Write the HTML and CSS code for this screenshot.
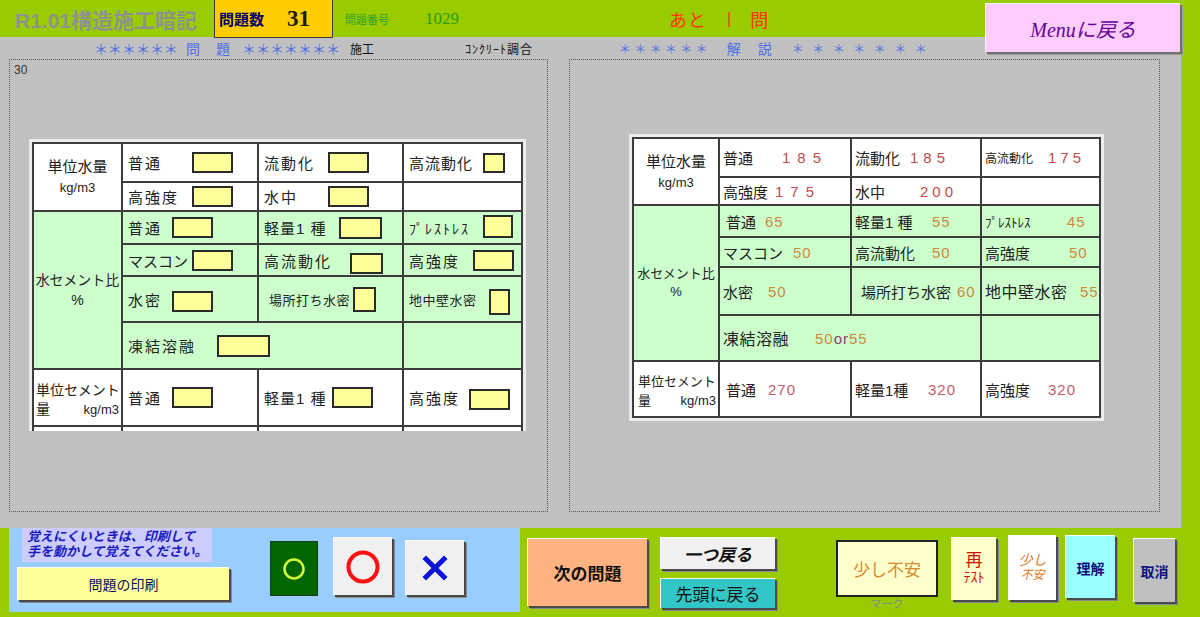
FILE: index.html
```html
<!DOCTYPE html>
<html lang="ja">
<head>
<meta charset="utf-8">
<title>R1.01構造施工暗記</title>
<link rel="stylesheet" href="styles.css">
</head>
<body>
<header class="topbar">
  <div class="title">R1.01構造施工暗記</div>
  <div class="count"><span class="count-label">問題数</span><span class="count-num">31</span></div>
  <span class="qno-label">問題番号</span>
  <span class="qno">1029</span>
  <div class="remain"><span class="ato">あと</span><span class="bar">|</span><span class="mon">問</span></div>
</header>
<div class="menu-btn">Menuに戻る</div>

<main class="work">
  <div class="heads">
    <span class="stars-l">＊＊＊＊＊＊</span><span class="hq1">問</span><span class="hq2">題</span><span class="stars-l2">＊＊＊＊＊＊＊</span>
    <span class="sub1">施工</span>
    <span class="sub2">ｺﾝｸﾘｰﾄ調合</span>
    <span class="stars-r">＊＊＊＊＊＊</span><span class="ha1">解</span><span class="ha2">説</span><span class="stars-r2">＊＊＊＊＊＊＊</span>
  </div>
  <div class="panels">
    <section class="panel panel-l">
      <div class="pageno">30</div>
      <div class="frame frame-l">
        <div class="tbl tbl-l">
          <div class="c w hd rs2"><span>単位水量</span><span class="unit">kg/m3</span></div>
          <div class="c w"><span class="lb l64">普通</span><span class="bx"></span></div>
          <div class="c w"><span class="lb l64">流動化</span><span class="bx"></span></div>
          <div class="c w"><span class="lb l74 tight">高流動化</span><span class="bx bx-n"></span></div>
          <div class="c w"><span class="lb l64">高強度</span><span class="bx"></span></div>
          <div class="c w"><span class="lb l64">水中</span><span class="bx"></span></div>
          <div class="c w"></div>

          <div class="c g hd hd-wc rs4"><span>水セメント比</span><span>%</span></div>
          <div class="c g"><span class="lb l44">普通</span><span class="bx"></span></div>
          <div class="c g"><span class="lb l75 tight">軽量1 種</span><span class="bx bx-43"></span></div>
          <div class="c g"><span class="lb l74 hw">ﾌﾟﾚｽﾄﾚｽ</span><span class="bx bx-30"></span></div>
          <div class="c g"><span class="lb l64 kata">マスコン</span><span class="bx"></span></div>
          <div class="c g"><span class="lb l86">高流動化</span><span class="bx bx-33"></span></div>
          <div class="c g"><span class="lb l64">高強度</span><span class="bx"></span></div>
          <div class="c g"><span class="lb l44">水密</span><span class="bx bx-lo"></span></div>
          <div class="c g"><span class="lb l89 s13 ind5">場所打ち水密</span><span class="bx bx-23"></span></div>
          <div class="c g"><span class="lb l80 s13">地中壁水密</span><span class="bx bx-21"></span></div>
          <div class="c g cs2"><span class="lb l89">凍結溶融</span><span class="bx bx-53"></span></div>
          <div class="c g"></div>

          <div class="c w hd2"><span>単位セメント</span><span class="hd2-row"><span>量</span><span class="unit">kg/m3</span></span></div>
          <div class="c w"><span class="lb l44">普通</span><span class="bx"></span></div>
          <div class="c w"><span class="lb l68 tight">軽量1 種</span><span class="bx"></span></div>
          <div class="c w"><span class="lb l60">高強度</span><span class="bx bx-lo"></span></div>

          <div class="c w"></div>
          <div class="c w"></div>
          <div class="c w"></div>
          <div class="c w"></div>
        </div>
      </div>
    </section>

    <section class="panel panel-r">
      <div class="frame frame-r">
        <div class="tbl tbl-r">
          <div class="c w hd rs2"><span>単位水量</span><span class="unit">kg/m3</span></div>
          <div class="c w"><span class="lb r59">普通</span><span class="num n-red sp8">185</span></div>
          <div class="c w"><span class="lb r55">流動化</span><span class="num n-red sp6">185</span></div>
          <div class="c w"><span class="lb r63 s12">高流動化</span><span class="num n-red sp5">175</span></div>
          <div class="c w"><span class="lb r52">高強度</span><span class="num n-red sp8">175</span></div>
          <div class="c w"><span class="lb r65">水中</span><span class="num n-red sp5">200</span></div>
          <div class="c w"></div>

          <div class="c g hd hd-wc-r rs4"><span>水セメント比</span><span>%</span></div>
          <div class="c g"><span class="lb r42 ind3">普通</span><span class="num n-or">65</span></div>
          <div class="c g"><span class="lb r77">軽量1 種</span><span class="num n-or">55</span></div>
          <div class="c g"><span class="lb r82 hw13">ﾌﾟﾚｽﾄﾚｽ</span><span class="num n-or">45</span></div>
          <div class="c g"><span class="lb r70">マスコン</span><span class="num n-or">50</span></div>
          <div class="c g"><span class="lb r77">高流動化</span><span class="num n-or">50</span></div>
          <div class="c g"><span class="lb r84">高強度</span><span class="num n-or">50</span></div>
          <div class="c g"><span class="lb r45">水密</span><span class="num n-or">50</span></div>
          <div class="c g"><span class="lb r102 ind6">場所打ち水密</span><span class="num n-or">60</span></div>
          <div class="c g"><span class="lb r95 s16">地中壁水密</span><span class="num n-or">55</span></div>
          <div class="c g cs2"><span class="lb r92 s16">凍結溶融</span><span class="num n-or">50<span class="n-or2">or</span>55</span></div>
          <div class="c g"></div>

          <div class="c w hd2 hd2-r"><span>単位セメント</span><span class="hd2-row"><span>量</span><span class="unit">kg/m3</span></span></div>
          <div class="c w"><span class="lb r45 ind3">普通</span><span class="num n-pk">270</span></div>
          <div class="c w"><span class="lb r73">軽量1種</span><span class="num n-pk">320</span></div>
          <div class="c w"><span class="lb r63">高強度</span><span class="num n-pk">320</span></div>
        </div>
      </div>
    </section>
  </div>
</main>

<footer class="footer">
  <div class="memo">
    <div class="memo-left">
      <p class="note">覚えにくいときは、印刷して<br>手を動かして覚えてください。</p>
      <div class="btn print">問題の印刷</div>
    </div>
    <div class="mk mk-green">
      <svg width="24" height="24" viewBox="0 0 24 24"><circle cx="12" cy="12" r="9.5" fill="none" stroke="#d8ff33" stroke-width="2.5"/></svg>
    </div>
    <div class="btn mk mk-o">
      <svg width="36" height="36" viewBox="0 0 36 36"><circle cx="18" cy="18" r="14.5" fill="none" stroke="#ff1010" stroke-width="4"/></svg>
    </div>
    <div class="btn mk mk-x">
      <svg width="28" height="28" viewBox="0 0 28 28"><path d="M5 5 L23 23 M23 5 L5 23" stroke="#0a14d8" stroke-width="5" stroke-linecap="square"/></svg>
    </div>
  </div>
  <div class="btn next">次の問題</div>
  <div class="navcol">
    <div class="btn back">一つ戻る</div>
    <div class="btn first">先頭に戻る</div>
  </div>
  <div class="markbox">
    <div class="mark-face">少し不安</div>
    <span class="mark-cap">マーク</span>
  </div>
  <div class="btn retest"><span class="re">再</span><span class="test">ﾃｽﾄ</span></div>
  <div class="btn unsure"><span>少し</span><span class="u2">不安</span></div>
  <div class="btn ok">理解</div>
  <div class="btn cancel">取消</div>
</footer>
</body>
</html>
```

FILE: styles.css
```css
* { box-sizing: border-box; margin: 0; padding: 0; }
html, body { width: 1200px; height: 617px; overflow: hidden; }
body {
  background: #99cc00;
  font-family: "Liberation Sans", "Noto Sans CJK JP", sans-serif;
  color: #222;
  position: relative;
}

/* ---------- top bar ---------- */
.topbar { height: 37px; display: flex; align-items: center; }
.title {
  margin-left: 15px; width: 199px;
  font-size: 21px; font-weight: bold; color: #8e948c;
  white-space: nowrap;
}
.count {
  align-self: flex-start;
  width: 119px; height: 38px;
  background: #ffcc00;
  border: 1px solid #3a3a3a; border-top: none;
  display: flex; align-items: center; padding-left: 4px;
}
.count-label { width: 68px; font-size: 15px; font-weight: bold; color: #000066; }
.count-num { font-family: "Liberation Serif", serif; font-size: 23px; font-weight: bold; color: #1a1a1a; }
.qno-label { margin-left: 12px; width: 80px; font-size: 11px; color: #2fa02f; }
.qno { font-family: "Liberation Serif", serif; font-size: 17px; color: #2f9a00; }
.remain { margin-left: 210px; display: flex; align-items: center; color: #ff3300; font-size: 18px; }
.ato { letter-spacing: 1px; }
.bar { margin-left: 20px; font-size: 16px; }
.mon { margin-left: 19px; }

.menu-btn {
  position: absolute; left: 985px; top: 3px;
  width: 195px; height: 49px;
  background: #ffccff;
  border-top: 1px solid #f4f4f4; border-left: 1px solid #f4f4f4;
  box-shadow: 2px 2px 0 #707070, 3px 3px 0 #9a9a9a;
  display: flex; align-items: center; justify-content: center;
  font-family: "Liberation Serif", "Noto Sans CJK JP", serif;
  font-style: italic; font-size: 20px; color: #660099;
}

/* ---------- work area ---------- */
.work { width: 1181px; height: 491px; background: #c0c0c0; }
.heads {
  height: 22px; display: flex; align-items: center;
  font-size: 14px; color: #4f6fe0; white-space: nowrap;
}
.stars-l { margin-left: 94px; }
.hq1 { margin-left: 8px; }
.hq2 { margin-left: 16px; }
.stars-l2 { margin-left: 12px; }
.sub1 { margin-left: 10px; font-size: 12px; color: #111; }
.sub2 { margin-left: 91px; font-size: 12px; letter-spacing: 1px; color: #111; }
.stars-r { margin-left: 86px; font-size: 12px; letter-spacing: 3.3px; }
.ha1 { margin-left: 16px; }
.ha2 { margin-left: 17px; }
.stars-r2 { margin-left: 20px; font-size: 12px; letter-spacing: 8.5px; }

.panels { display: flex; padding-left: 9px; }
.panel { height: 453px; border: 1px dotted #555; }
.panel-l { width: 539px; padding: 3px 4px; }
.panel-r { width: 591px; margin-left: 21px; }
.pageno { font-size: 12px; line-height: 14px; color: #333; }

.frame { background: #ececec; padding: 3px 3px 0 3px; overflow: hidden; }
.frame-l { width: 497px; height: 292px; margin: 62px 0 0 15px; }
.frame-r { width: 475px; height: 287px; margin: 74px 0 0 59px; }

.tbl { display: grid; border-left: 2px solid #3c3c3c; border-top: 2px solid #3c3c3c; }
.tbl-l {
  grid-template-columns: 89px 136px 145px 119px;
  grid-template-rows: 39px 29px 33px 32px 46px 47px 57px 20px;
}
.tbl-r {
  grid-template-columns: 86px 132px 130px 119px;
  grid-template-rows: 39px 28px 32px 30px 48px 46px 56px;
}
.c {
  border-right: 2px solid #3c3c3c; border-bottom: 2px solid #3c3c3c;
  display: flex; align-items: center;
  padding-left: 5px;
  font-size: 15px; white-space: nowrap; color: #222;
}
.tbl-l .c { letter-spacing: 2px; }
.tbl-r .c { padding-left: 3px; }
.w { background: #ffffff; }
.g { background: #ccffcc; }
.rs2 { grid-row: span 2; }
.rs4 { grid-row: span 4; }
.cs2 { grid-column: span 2; }

.c.hd {
  flex-direction: column; justify-content: center; align-items: center;
  padding: 0; letter-spacing: 0; line-height: 21px; font-size: 15px;
}
.tbl .c.hd, .tbl .c.hd2 { letter-spacing: 0; }
.c.hd-wc { font-size: 14px; line-height: 20px; }
.c.hd-wc-r { font-size: 13px; line-height: 18px; }
.unit { font-size: 13px; }
.c.hd2 {
  flex-direction: column; align-items: stretch; justify-content: center;
  padding: 5px 2px 0 2px; font-size: 14px; line-height: 19px;
}
.c.hd2-r { font-size: 13px; padding: 3px 2px 0 4px; }
.hd2-row { display: flex; justify-content: space-between; }

.lb { flex: none; }
.tight { letter-spacing: 1px; }
.kata { letter-spacing: 0; }
.hw { font-size: 14px; letter-spacing: 2px; }
.hw13 { font-size: 13px; letter-spacing: 0; }
.s12 { font-size: 12px; }
.s13 { font-size: 13px; letter-spacing: 0.5px; }
.s16 { font-size: 16px; letter-spacing: 0.5px; }
.ind3 { padding-left: 3px; }
.ind5 { padding-left: 5px; }
.ind6 { padding-left: 6px; }

.l44 { width: 44px; } .l60 { width: 60px; } .l64 { width: 64px; } .l68 { width: 68px; }
.l74 { width: 74px; } .l75 { width: 75px; } .l80 { width: 80px; } .l86 { width: 86px; } .l89 { width: 89px; }

.r42 { width: 42px; } .r45 { width: 45px; } .r52 { width: 52px; } .r55 { width: 55px; }
.r59 { width: 59px; } .r63 { width: 63px; } .r65 { width: 65px; } .r70 { width: 70px; }
.r73 { width: 73px; } .r77 { width: 77px; } .r82 { width: 82px; } .r84 { width: 84px; }
.r92 { width: 92px; } .r95 { width: 95px; } .r102 { width: 102px; }

.bx {
  flex: none; display: block;
  width: 41px; height: 21px;
  background: #ffff99; border: 2px solid #2a2a2a;
}
.bx-n { width: 22px; height: 20px; }
.bx-43 { width: 43px; height: 22px; }
.bx-30 { width: 30px; height: 23px; margin-top: -3px; }
.bx-33 { width: 33px; height: 21px; margin-top: 7px; }
.bx-23 { width: 23px; height: 25px; }
.bx-21 { width: 21px; height: 26px; margin-top: 6px; }
.bx-53 { width: 53px; height: 22px; }
.bx-lo { margin-top: 4px; }

.num { font-family: "Liberation Sans", sans-serif; font-size: 15px; letter-spacing: 1px; }
.n-red { color: #c24a4a; }
.n-or { color: #cc8a3a; }
.n-or2 { color: #7a4a70; }
.n-pk { color: #c45c6c; }
.sp5 { letter-spacing: 4px; }
.sp6 { letter-spacing: 5px; }
.sp8 { letter-spacing: 7px; }

/* ---------- footer ---------- */
.footer { height: 89px; display: flex; align-items: flex-start; padding-left: 9px; }
.btn {
  display: flex; align-items: center; justify-content: center;
  border-top: 1px solid #fafafa; border-left: 1px solid #fafafa;
  box-shadow: 2px 2px 0 #4a4a4a, 3px 3px 0 #8a8a8a;
  flex: none;
}
.memo {
  width: 511px; height: 84px; background: #99ccff;
  display: flex; align-items: flex-start; flex: none;
}
.memo-left { margin-left: 8px; width: 215px; }
.note {
  margin-left: 5px; width: 190px; height: 34px;
  background: #ccccff;
  padding: 1px 0 0 5px;
  font-size: 13px; line-height: 15px; font-weight: bold; font-style: italic;
  color: #1a1ac0; white-space: nowrap;
}
.print {
  margin-top: 5px; width: 212px; height: 33px;
  background: #ffff99; font-size: 14px; color: #101060;
}
.mk { flex: none; display: flex; align-items: center; justify-content: center; }
.mk-green {
  margin-left: 38px; margin-top: 13px; width: 48px; height: 55px;
  background: #006600; border: 1px solid #1a3a1a;
}
.mk-o { margin-left: 15px; margin-top: 9px; width: 59px; height: 58px; background: #f0f0f0; }
.mk-x { margin-left: 13px; margin-top: 12px; width: 59px; height: 55px; background: #f0f0f0; }

.next {
  margin-left: 7px; margin-top: 10px; width: 120px; height: 68px;
  background: #ffb380; font-size: 17px; font-weight: bold; color: #111;
}
.navcol { margin-left: 13px; margin-top: 9px; width: 115px; flex: none; }
.back {
  height: 32px; background: #f0f0f0;
  font-size: 17px; font-weight: bold; font-style: italic; color: #111;
}
.first {
  margin-top: 9px; height: 30px; background: #33c6c6;
  font-size: 17px; color: #111;
}
.markbox {
  margin-left: 61px; margin-top: 12px; width: 102px; flex: none;
  display: flex; flex-direction: column; align-items: center;
}
.mark-face {
  width: 102px; height: 57px; background: #ffffcc; border: 2px solid #222;
  display: flex; align-items: center; justify-content: center;
  font-size: 17px; color: #d88a2a;
}
.mark-cap { margin-top: 1px; font-size: 11px; line-height: 13px; color: #8a8a8a; }
.retest {
  margin-left: 13px; margin-top: 9px; width: 45px; height: 63px;
  background: #ffffcc; flex-direction: column; color: #cc1100; line-height: 17px;
}
.re { font-size: 17px; }
.test { font-size: 14px; }
.unsure {
  margin-left: 12px; margin-top: 7px; width: 48px; height: 65px;
  background: #ffffff; flex-direction: column;
  font-size: 14px; font-style: italic; color: #e07a20; line-height: 15px;
}
.u2 { font-size: 12px; }
.ok {
  margin-left: 9px; margin-top: 7px; width: 50px; height: 63px;
  background: #99ffff; font-size: 14px; font-weight: bold; color: #101080;
  align-items: flex-start; padding-top: 22px;
}
.cancel {
  margin-left: 18px; margin-top: 10px; width: 42px; height: 64px;
  background: #c0c0c0; font-size: 14px; font-weight: bold; color: #101080;
}
```
